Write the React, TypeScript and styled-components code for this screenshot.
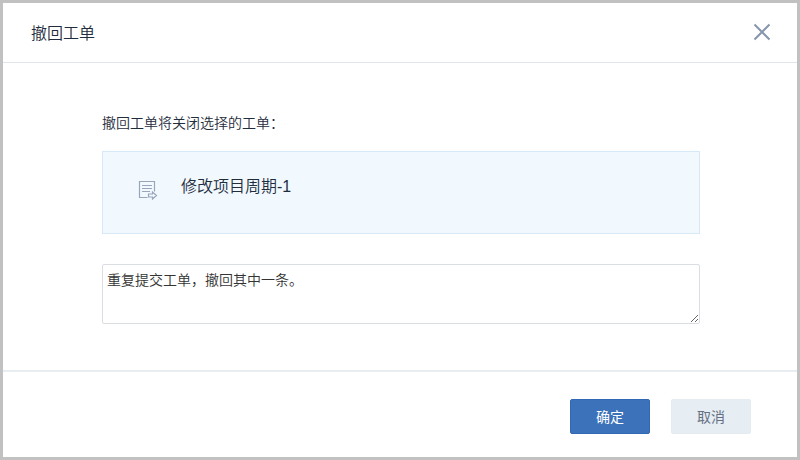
import React, { useState } from "react";
import styled, { createGlobalStyle } from "styled-components";

const GlobalStyle = createGlobalStyle`
  *, *::before, *::after { box-sizing: border-box; }
  body {
    margin: 0;
    background: #ffffff;
    font-family: "Liberation Sans", "Noto Sans CJK SC", sans-serif;
    color: #1f2d3d;
  }
  button, textarea { font-family: inherit; }
`;

const Dialog = styled.section`
  display: flex;
  flex-direction: column;
  min-height: 100vh;
  border: 3px solid #c1c1c1;
  background: #ffffff;
`;

const Header = styled.header`
  display: flex;
  align-items: flex-start;
  justify-content: space-between;
  padding: 19px 26px 16px 28px;
  border-bottom: 1px solid #dfe5ea;
`;

const Title = styled.h1`
  margin: 0;
  font-size: 16px;
  font-weight: 350;
  line-height: 24px;
`;

const CloseButton = styled.button`
  display: flex;
  margin-top: 1px;
  padding: 0;
  border: 0;
  background: none;
  color: #8796ad;
  cursor: pointer;
`;

const Body = styled.form`
  display: flex;
  flex: 1;
  flex-direction: column;
  padding: 48px 97px 46px 99px;
`;

const Prompt = styled.label`
  margin-bottom: 16px;
  font-size: 14px;
  font-weight: 350;
  line-height: 24px;
`;

const OrderCard = styled.div`
  display: flex;
  gap: 23px;
  padding: 23px 35px 33px;
  border: 1px solid #d6e9f9;
  background: #f1f9ff;
`;

const OrderIcon = styled.svg`
  flex: none;
  margin-top: 5px;
`;

const OrderName = styled.span`
  font-size: 16px;
  font-weight: 350;
  line-height: 24px;
`;

const Reason = styled.textarea`
  display: block;
  width: 100%;
  height: 60px;
  margin-top: 30px;
  padding: 4px;
  border: 1px solid #dadde2;
  border-radius: 2px;
  outline: none;
  background: #ffffff;
  color: #333333;
  font-size: 14px;
  font-weight: 350;
  line-height: 22px;
  resize: vertical;
`;

const Footer = styled.footer`
  display: flex;
  justify-content: flex-end;
  gap: 21px;
  padding: 27px 46px 23px;
  border-top: 2px solid #e8edf1;
`;

const ActionButton = styled.button<{ $primary?: boolean }>`
  width: 80px;
  height: 35px;
  padding: 0 0 2px;
  border: 1px solid ${(p) => (p.$primary ? "#3269b4" : "#e4ebf1")};
  border-radius: 2px;
  background: ${(p) => (p.$primary ? "#3c72b9" : "#e6edf3")};
  color: ${(p) => (p.$primary ? "#ffffff" : "#657083")};
  font-size: 14px;
  font-weight: 400;
  cursor: pointer;
`;

export default function App() {
  const [reason, setReason] = useState("重复提交工单，撤回其中一条。");

  return (
    <>
      <GlobalStyle />
      <Dialog role="dialog" aria-labelledby="dialog-title" lang="zh-CN">
        <Header>
          <Title id="dialog-title">撤回工单</Title>
          <CloseButton type="button" aria-label="关闭">
            <svg width="18" height="18" viewBox="0 0 18 18" fill="none" stroke="currentColor" strokeWidth="2">
              <path d="M1.5 1.5l15 15M16.5 1.5l-15 15" />
            </svg>
          </CloseButton>
        </Header>
        <Body id="withdraw-form" onSubmit={(e) => e.preventDefault()}>
          <Prompt htmlFor="reason">撤回工单将关闭选择的工单：</Prompt>
          <OrderCard>
            <OrderIcon width="20" height="20" viewBox="0 0 20 20" fill="none" stroke="#98a5ba" strokeWidth="1.2" aria-hidden="true">
              <path d="M9.5 17.5h-8v-16h15v10" />
              <path d="M4 5.5h10M4 8.5h10M4 11.5h8" />
              <path d="M10.5 14h4v-2l4 3.5-4 3.5v-2h-4z" />
            </OrderIcon>
            <OrderName>修改项目周期-1</OrderName>
          </OrderCard>
          <Reason id="reason" value={reason} onChange={(e) => setReason(e.target.value)} />
        </Body>
        <Footer>
          <ActionButton type="submit" form="withdraw-form" $primary>
            确定
          </ActionButton>
          <ActionButton type="button">取消</ActionButton>
        </Footer>
      </Dialog>
    </>
  );
}
